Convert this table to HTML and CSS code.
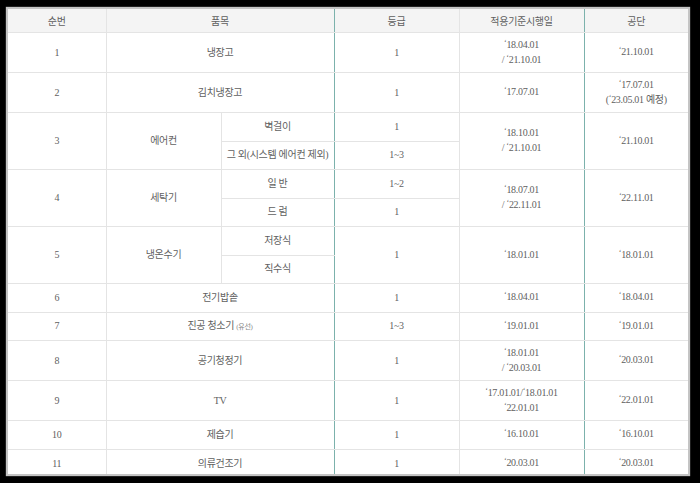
FILE: index.html
```html
<!DOCTYPE html>
<html lang="ko">
<head>
<meta charset="utf-8">
<link rel="stylesheet" href="styles.css">
</head>
<body>
<div class="sheet">
<table class="grid">
<colgroup>
<col class="c1"><col class="c2a"><col class="c2b"><col class="c3"><col class="c4"><col class="c5">
</colgroup>
<thead>
<tr class="hd"><th>순번</th><th colspan="2" class="tealr">품목</th><th>등급</th><th class="tealr">적용기준시행일</th><th>공단</th></tr>
</thead>
<tbody>
<tr class="r2"><td>1</td><td colspan="2" class="tealr">냉장고</td><td>1</td><td class="tealr"><span class="ap">‘</span>18.04.01<br>/ <span class="ap">‘</span>21.10.01</td><td><span class="ap">‘</span>21.10.01</td></tr>
<tr class="r2"><td>2</td><td colspan="2" class="tealr">김치냉장고</td><td>1</td><td class="tealr"><span class="ap">‘</span>17.07.01</td><td><span class="ap">‘</span>17.07.01<br>(<span class="ap">‘</span>23.05.01 예정)</td></tr>
<tr class="r1"><td rowspan="2">3</td><td rowspan="2">에어컨</td><td class="tealr">벽걸이</td><td>1</td><td rowspan="2" class="tealr"><span class="ap">‘</span>18.10.01<br>/ <span class="ap">‘</span>21.10.01</td><td rowspan="2"><span class="ap">‘</span>21.10.01</td></tr>
<tr class="r1"><td class="tealr">그 외(시스템 에어컨 제외)</td><td>1~3</td></tr>
<tr class="r1"><td rowspan="2">4</td><td rowspan="2">세탁기</td><td class="tealr">일 반</td><td>1~2</td><td rowspan="2" class="tealr"><span class="ap">‘</span>18.07.01<br>/ <span class="ap">‘</span>22.11.01</td><td rowspan="2"><span class="ap">‘</span>22.11.01</td></tr>
<tr class="r1"><td class="tealr">드 럼</td><td>1</td></tr>
<tr class="r1"><td rowspan="2">5</td><td rowspan="2">냉온수기</td><td class="tealr">저장식</td><td rowspan="2" class="teall">1</td><td rowspan="2" class="tealr"><span class="ap">‘</span>18.01.01</td><td rowspan="2"><span class="ap">‘</span>18.01.01</td></tr>
<tr class="r1"><td class="tealr">직수식</td></tr>
<tr class="r1"><td>6</td><td colspan="2" class="tealr">전기밥솥</td><td>1</td><td class="tealr"><span class="ap">‘</span>18.04.01</td><td><span class="ap">‘</span>18.04.01</td></tr>
<tr class="r1"><td>7</td><td colspan="2" class="tealr">진공 청소기 <span class="tiny">(유선)</span></td><td>1~3</td><td class="tealr"><span class="ap">‘</span>19.01.01</td><td><span class="ap">‘</span>19.01.01</td></tr>
<tr class="r2"><td>8</td><td colspan="2" class="tealr">공기청정기</td><td>1</td><td class="tealr"><span class="ap">‘</span>18.01.01<br>/ <span class="ap">‘</span>20.03.01</td><td><span class="ap">‘</span>20.03.01</td></tr>
<tr class="r2"><td>9</td><td colspan="2" class="tealr">TV</td><td>1</td><td class="tealr"><span class="ap">‘</span>17.01.01/<span class="ap">‘</span>18.01.01<br><span class="ap">‘</span>22.01.01</td><td><span class="ap">‘</span>22.01.01</td></tr>
<tr class="r1"><td>10</td><td colspan="2" class="tealr">제습기</td><td>1</td><td class="tealr"><span class="ap">‘</span>16.10.01</td><td><span class="ap">‘</span>16.10.01</td></tr>
<tr class="r1"><td>11</td><td colspan="2" class="tealr">의류건조기</td><td>1</td><td class="tealr"><span class="ap">‘</span>20.03.01</td><td><span class="ap">‘</span>20.03.01</td></tr>
</tbody>
</table>
</div>
</body>
</html>
```
FILE: styles.css
```css
html, body {
  margin: 0;
  padding: 0;
  background: #000;
}
body {
  width: 700px;
  height: 483px;
  overflow: hidden;
  padding-top: 9px;
  padding-left: 8px;
  box-sizing: border-box;
}
.sheet {
  width: 680px;
  height: 465px;
  background: #fff;
  overflow: hidden;
  box-shadow: 0 0 1px 2px #c4c4c4;
}
.grid {
  width: 680px;
  border-collapse: collapse;
  table-layout: fixed;
  font-family: "Liberation Serif", "Noto Sans CJK KR", serif;
  font-size: 10px;
  color: #5f5f5f;
  letter-spacing: -0.3px;
}
.c1 { width: 98px; }
.c2a { width: 115px; }
.c2b { width: 113px; }
.c3 { width: 125px; }
.c4 { width: 125px; }
.c5 { width: 104px; }
.grid th, .grid td {
  border: 1px solid #e4e4e4;
  text-align: center;
  vertical-align: middle;
  padding: 0;
  line-height: 14px;
}
.grid th {
  background: #f4f4f4;
  font-weight: normal;
  height: 23px;
  border-top: none;
  font-family: "Noto Sans CJK KR", sans-serif;
}
.grid td {
  font-family: "Liberation Serif", "Noto Sans CJK KR", serif;
}
.grid tr > :first-child { border-left: none; }
.grid tr > :last-child { border-right: none; }
.grid .tealr { border-right: 1px solid #7cb2ac; }
.grid .teall { border-left: 1px solid #7cb2ac; }
.grid tbody tr:last-child td { border-bottom: none; }
.r1 { height: 28.5px; }
.r2 { height: 40px; }
.ap {
  font-size: 8px;
  position: relative;
  top: -3px;
}
.tiny {
  font-size: 7px;
  color: #888;
}
```
